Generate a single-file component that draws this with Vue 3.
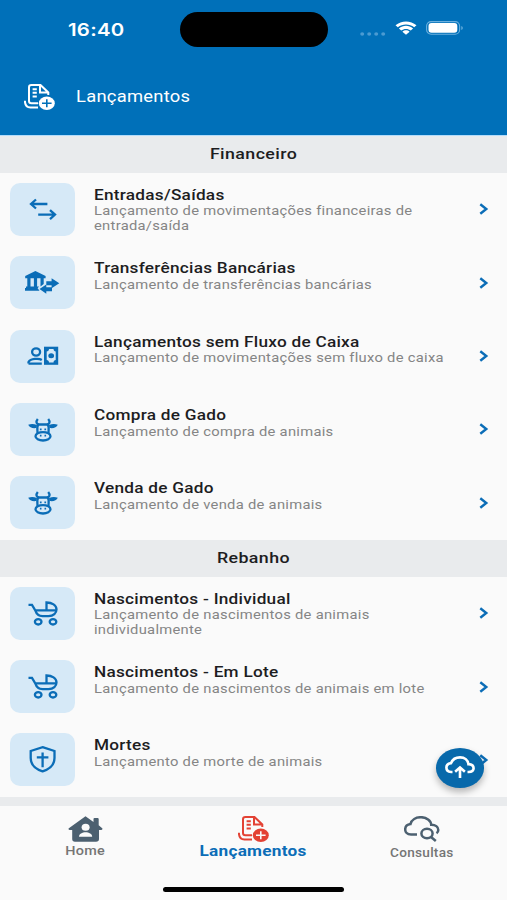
<template>
  <div class="screen">
    <header class="top">
      <div class="status">
        <span class="clock"><span class="wide">16:40</span></span>
        <span class="island"></span>
        <span class="signals">
          <svg class="dots" width="27" height="4" viewBox="0 0 27 4">
            <ellipse v-for="i in 4" :key="i" :cx="i * 7 - 4.8" cy="2" rx="2" ry="1.7" />
          </svg>
          <svg class="wifi" width="22" height="14" viewBox="0 0 22 14" preserveAspectRatio="none">
            <path d="M0.5 4.2C6.5-.9 15.500-.9 21.500 4.200L19.200 6.300C14.500 2.500 7.500 2.500 2.800 6.300Z" />
            <path d="M3.900 7.500C8 3.900 14 3.900 18.100 7.500L15.800 9.600C13 7.300 9 7.300 6.200 9.600Z" />
            <path d="M7.400 10.700C9.500 8.800 12.500 8.800 14.600 10.700L11 13.800Z" />
          </svg>
          <svg class="battery" width="38" height="14" viewBox="0 0 38 14">
            <rect x="0.6" y="0.6" width="33" height="12.600" rx="4.500" class="shell" />
            <rect x="2.500" y="2" width="28.800" height="9.800" rx="3" class="charge" />
            <path d="M35.300 5v4c2-.7 2-3.300 0-4z" class="cap" />
          </svg>
        </span>
      </div>
      <div class="title-bar">
        <svg class="doc-icon" width="31" height="26" viewBox="0 0 31 26">
          <g class="lines">
            <path d="M14 19.300H7.500Q5 19.300 5 17V3.200Q5 1 7.500 1H16.500L24.300 8.500V11M16 1.300V8.500H24" />
            <path d="M.9 16.800C.9 21 3 23.600 6.500 23.600H14" />
            <path d="M8.600 5.200H12.800M8.600 8.800H12.800M8.600 12.400H12.800" />
          </g>
          <ellipse cx="22.800" cy="19.200" rx="8" ry="6.700" class="badge" />
          <path d="M18 19.200H27.600M22.800 15.200V23.200" class="plus" />
        </svg>
        <h1><span class="wide">Lançamentos</span></h1>
      </div>
    </header>

    <main>
      <section v-for="group in groups" :key="group.name">
        <h2><span class="wide">{{ group.name }}</span></h2>
        <div v-for="item in group.items" :key="item.title" class="row">
          <div class="tile">
            <svg width="65" height="53" viewBox="0 0 65 53">
              <g v-if="item.icon === 'arrows'" class="stroke">
                <path d="M37.400 21H21.500M26 16.500L21 21L26 25.500" />
                <path d="M28.200 31.600H44.500M40 27.100L45 31.600L40 36.100" />
              </g>
              <g v-else-if="item.icon === 'bank'" class="fill">
                <path d="M25.400 15L35.600 20V22.200H15.200V20Z" />
                <path d="M17.300 22h3.200v9h-3.200zM23.900 22h3.200v9h-3.200zM30.500 22h3.200v6l-3.200 2.500zM16 30.400H29L27.800 32H16zM15 32.100H27.500L29.500 34.800H15z" />
                <path d="M36.300 25.200H41.600V22.200L49.300 27.300L41.600 32.200V29.300H36.300Z" />
                <path d="M29.500 33L36.300 28.400V31.200H42V35.200H36.300V37.700Z" />
              </g>
              <g v-else-if="item.icon === 'cash'">
                <ellipse cx="26.100" cy="22" rx="4" ry="3.600" class="stroke" />
                <path d="M18.500 33.600V32C20.500 28.500 29 28 31.800 30M18.500 33.600H31.800" class="stroke" />
                <path d="M34 16.700H48.200V34.800H34Z" class="fill" />
                <path d="M39 19H43.500C43.500 20.500 44.500 21.500 45.700 21.500V30C44.500 30 43.500 31 43.500 32.500H39C39 31 38 30 36.700 30V21.500C38 21.500 39 20.500 39 19Z" class="hole" />
                <ellipse cx="41.200" cy="25.700" rx="2.900" ry="2.500" class="fill" />
              </g>
              <g v-else-if="item.icon === 'cow'">
                <path d="M27.800 16C25.500 18.800 26.300 21 29.200 21.500H36.800C39.700 21 40.500 18.800 38.200 16" class="stroke" />
                <path d="M18.200 21.800C21 20.500 24 20.700 27 22L26.500 25C22.500 25.600 19.500 24.600 18.200 21.800ZM47.800 21.800C45 20.500 42 20.700 39 22L39.500 25C43.500 25.600 46.500 24.600 47.800 21.800Z" class="fill" />
                <path d="M28.500 21.700C26.300 23.500 27.700 27 27.500 30.500M37.500 21.700C39.700 23.500 38.300 27 38.500 30.500" class="stroke" />
                <ellipse cx="33" cy="33.300" rx="7.500" ry="4.200" class="stroke" />
                <path d="M29.900 25.400h1.700v1.900h-1.700zM34.400 25.400h1.700v1.900h-1.700zM29.900 31.800h1.600v1.600h-1.600zM34.500 31.800h1.600v1.600h-1.600z" class="fill" />
              </g>
              <g v-else-if="item.icon === 'stroller'" class="stroke">
                <path d="M18.500 17.900H22L25.300 23.500C26.500 27.300 29 29.100 32.500 29.100H38.500C43.500 29.100 46.500 26 46.500 22.500C46.500 18.200 42 15.500 36.500 15.500V23.300M25 23.300H46.400" />
                <ellipse cx="28.200" cy="34.800" rx="3.300" ry="2.700" />
                <ellipse cx="43" cy="34.800" rx="3.300" ry="2.700" />
              </g>
              <g v-else class="stroke">
                <path d="M32.600 14.200L44.500 18V25C44.500 31.500 39.500 36.200 32.600 38.300C25.700 36.200 20.700 31.500 20.700 25V18Z" />
                <path d="M32.600 19.500V34.300M26.800 24.300H38.400" />
              </g>
            </svg>
          </div>
          <div class="text">
            <h3><span class="wide">{{ item.title }}</span></h3>
            <p v-for="line in item.lines" :key="line"><span class="wide">{{ line }}</span></p>
          </div>
          <svg class="chevron" width="10" height="12" viewBox="0 0 10 12">
            <path d="M1.300 1.200L7.300 6L1.300 10.800" />
          </svg>
        </div>
      </section>
    </main>

    <button class="fab" aria-label="Enviar">
      <svg width="30" height="23" viewBox="0 0 32 24" preserveAspectRatio="none">
        <path d="M8 16.700H6.500C3 16.500 1.500 14.500 1.500 12C1.500 9.500 3.500 7.800 6.500 7.400C8 3.800 11.500 1.500 16 1.500C21 1.500 24.500 4.300 25 8.500C28.500 8.700 30.500 10.500 30.500 12.800C30.500 15.300 28.500 16.700 25 16.700H24" />
        <path d="M16 23V12.500M10.800 16.500L16 12L21.200 16.500" />
      </svg>
    </button>

    <nav>
      <a class="tab home">
        <svg width="35" height="26" viewBox="0 0 35 26">
          <path d="M17.500.3L25.500 6V3Q25.500 2 26.500 2H29.500Q30.700 2 30.700 3V9.300L34.500 12.500Q34.500 14 33 14H31V23Q31 25.700 28 25.700H7Q4.200 25.700 4.200 23V14H2Q.3 14 .5 12.500Z" class="house" />
          <ellipse cx="17.600" cy="11.300" rx="4" ry="3.500" class="person" />
          <path d="M11 20.700C11 14.700 24.200 14.700 24.200 20.700Z" class="person" />
        </svg>
        <span class="label"><span class="wide">Home</span></span>
      </a>
      <a class="tab active">
        <svg class="doc-icon" width="31" height="26" viewBox="0 0 31 26">
          <g class="lines">
            <path d="M14 19.300H7.500Q5 19.300 5 17V3.200Q5 1 7.500 1H16.500L24.300 8.500V11M16 1.300V8.500H24" />
            <path d="M.9 16.800C.9 21 3 23.600 6.500 23.600H14" />
            <path d="M8.600 5.200H12.800M8.600 8.800H12.800M8.600 12.400H12.800" />
          </g>
          <ellipse cx="22.800" cy="19.200" rx="8" ry="6.700" class="badge" />
          <path d="M18 19.200H27.600M22.800 15.200V23.200" class="plus" />
        </svg>
        <span class="label"><span class="wide">Lançamentos</span></span>
      </a>
      <a class="tab search">
        <svg width="36" height="26" viewBox="0 0 36 26">
          <path d="M13 18.500H7C3 18.500 1.200 16 1.200 13.500C1.200 10.500 3.500 8.400 6.500 8C7.500 3.800 12 1.200 17 1.200C22.500 1.200 27 4.500 27.200 8.800C31.500 8.900 34.300 11 34.300 14C34.300 15.500 33.700 16.500 32.500 17.300" />
          <ellipse cx="23" cy="17.500" rx="5.600" ry="4.700" />
          <path d="M27 21L31.800 25" />
        </svg>
        <span class="label"><span class="wide">Consultas</span></span>
      </a>
    </nav>
    <div class="indicator"></div>
  </div>
</template>

<script setup>
const groups = [
  {
    name: 'Financeiro',
    items: [
      { icon: 'arrows', title: 'Entradas/Saídas', lines: ['Lançamento de movimentações financeiras de', 'entrada/saída'] },
      { icon: 'bank', title: 'Transferências Bancárias', lines: ['Lançamento de transferências bancárias'] },
      { icon: 'cash', title: 'Lançamentos sem Fluxo de Caixa', lines: ['Lançamento de movimentações sem fluxo de caixa'] },
      { icon: 'cow', title: 'Compra de Gado', lines: ['Lançamento de compra de animais'] },
      { icon: 'cow', title: 'Venda de Gado', lines: ['Lançamento de venda de animais'] },
    ],
  },
  {
    name: 'Rebanho',
    items: [
      { icon: 'stroller', title: 'Nascimentos - Individual', lines: ['Lançamento de nascimentos de animais', 'individualmente'] },
      { icon: 'stroller', title: 'Nascimentos - Em Lote', lines: ['Lançamento de nascimentos de animais em lote'] },
      { icon: 'shield', title: 'Mortes', lines: ['Lançamento de morte de animais'] },
    ],
  },
]
</script>

<style>
body {
  margin: 0;
}
</style>

<style scoped>
.screen {
  position: relative;
  display: flex;
  flex-direction: column;
  width: 507px;
  height: 900px;
  overflow: hidden;
  background: #fafafa;
  font-family: Roboto, "Liberation Sans", sans-serif;
}
svg {
  display: block;
  flex: none;
  fill: none;
}
h1, h2, h3, p {
  margin: 0;
}
.wide {
  display: inline-block;
  white-space: nowrap;
  letter-spacing: 0.22px;
  transform: scaleX(1.163);
  transform-origin: left center;
}
.top {
  flex: none;
  box-sizing: border-box;
  height: 136px;
  background: #0070b9;
  border-bottom: 1px solid #b3dcfb;
  color: #fff;
}
.status {
  display: grid;
  grid-template-columns: 180px 148px 1fr;
  height: 59px;
  align-items: center;
}
.clock {
  padding-left: 68px;
  font: 600 17.5px/20px Inter, sans-serif;
}
.island {
  height: 35px;
  border-radius: 18px;
  background: #000;
}
.signals {
  display: flex;
  align-items: center;
  padding-left: 31.500px;
}
.dots {
  margin-top: 8px;
  fill: #4b9bd2;
}
.wifi {
  margin: -3px 0 0 8.500px;
  fill: #fff;
}
.battery {
  margin: -3px 0 0 9px;
}
.shell {
  stroke: #6bb0de;
  stroke-width: 1.1;
}
.charge {
  fill: #fff;
}
.cap {
  fill: #6bb0de;
}
.title-bar {
  display: flex;
  align-items: center;
  gap: 21.300px;
  height: 76px;
  padding-left: 24px;
}
h1 {
  font-size: 15.800px;
  font-weight: 400;
  line-height: 20px;
}
.doc-icon .lines {
  stroke: currentColor;
  stroke-width: 2;
}
.badge {
  fill: currentColor;
}
.plus {
  stroke: #0070b9;
  stroke-width: 1.6;
}
main {
  flex: none;
  height: 670px;
  overflow: hidden;
  background: #e9ebed;
}
section {
  background: #fafafa;
}
h2 {
  height: 37.100px;
  background: #e9ebed;
  color: #1d1d1f;
  font-size: 15.300px;
  font-weight: 500;
  line-height: 37px;
  text-align: center;
}
h2 .wide {
  letter-spacing: 0.35px;
}
h2 .wide, .label .wide {
  transform-origin: center;
}
.row {
  display: flex;
  box-sizing: border-box;
  height: 73.350px;
  padding: 9.800px 18px 0 10.300px;
}
.tile {
  flex: none;
  width: 65px;
  height: 53px;
  border-radius: 10px;
  background: #d6e9f7;
}
.stroke {
  fill: none;
  stroke: #0b6db7;
  stroke-width: 2.3;
}
.fill {
  fill: #0b6db7;
}
.hole {
  fill: #d6e9f7;
}
.text {
  flex: 1;
  min-width: 0;
  padding: 4px 0 0 18.400px;
}
h3 {
  color: #1d1d1f;
  font-size: 14.800px;
  font-weight: 500;
  line-height: 17.600px;
}
p {
  height: 14.400px;
  color: #858585;
  font-size: 12.700px;
  line-height: 14.400px;
}
p .wide {
  letter-spacing: 0.24px;
}
.chevron {
  margin-top: 20.500px;
  stroke: #0b6db7;
  stroke-width: 2.4;
}
.fab {
  position: absolute;
  left: 436px;
  top: 748px;
  display: flex;
  align-items: center;
  justify-content: center;
  width: 48px;
  height: 39.500px;
  padding: 0;
  border: 0;
  border-radius: 50%;
  background: #0869ab;
  box-shadow: 0 4px 7px rgba(0, 0, 0, 0.28);
}
.fab svg {
  stroke: #fff;
  stroke-width: 2.8;
}
nav {
  display: grid;
  grid-template-columns: 170px 167px 170px;
  height: 80px;
  background: #fafafa;
}
.tab {
  display: flex;
  flex-direction: column;
  align-items: center;
  padding-top: 9.500px;
  color: #757575;
}
.label {
  font-size: 12.400px;
  font-weight: 500;
  line-height: 18px;
}
.house {
  fill: #4c6070;
}
.person {
  fill: #fafafa;
}
.active {
  color: #e34234;
}
.active .plus {
  stroke: #fafafa;
}
.active .label {
  color: #0b6db7;
  font-size: 14.800px;
  font-weight: 700;
}
.home .label {
  padding-top: 0.500px;
}
.search svg {
  stroke: #4c6070;
  stroke-width: 2.5;
}
.search .label {
  padding-top: 2px;
}
.search .wide {
  transform: scaleX(1.1);
}
.indicator {
  width: 181px;
  height: 5px;
  margin: 1px auto 0;
  border-radius: 3px;
  background: #000;
}
</style>
